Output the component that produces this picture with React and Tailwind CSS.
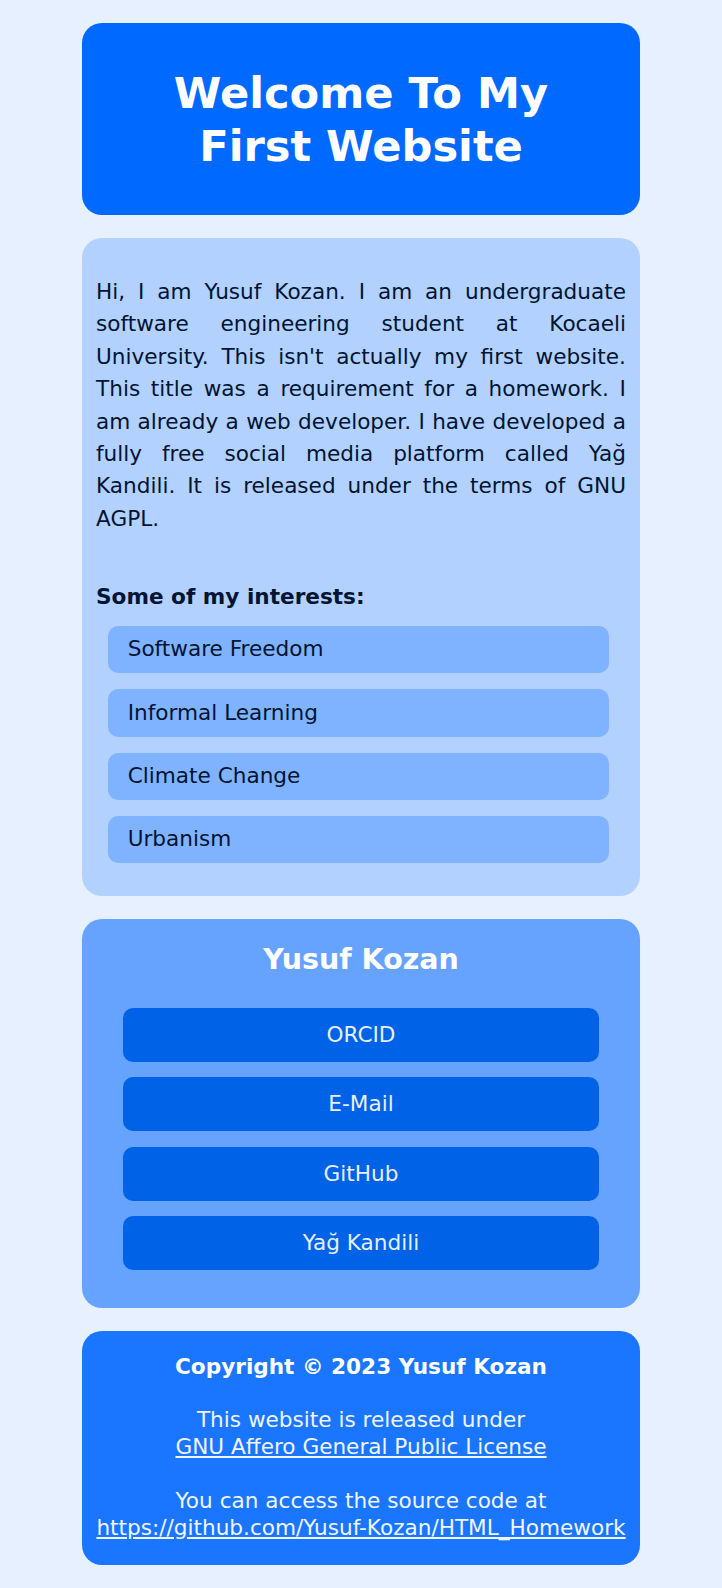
import React from 'react';

const interests = ['Software Freedom', 'Informal Learning', 'Climate Change', 'Urbanism'];
const links = ['ORCID', 'E-Mail', 'GitHub', 'Yağ Kandili'];

const App = () => {
    return (
        <div className="min-h-screen bg-[#e6f0ff] font-['DejaVu_Sans',sans-serif] pt-[23px] pb-[23px]">
            <div className="w-[558px] mx-auto flex flex-col gap-[23px]">
                {/* header */}
                <header className="bg-[#0069ff] rounded-[20px] pt-[44px] pb-[42.7px] text-center">
                    <h1 className="text-white font-bold text-[43.2px] leading-[52.6px]">
                        Welcome To My
                        <br />
                        First Website
                    </h1>
                </header>

                {/* about */}
                <section className="bg-[#b3d1ff] rounded-[20px] px-[14px] pt-[38px] pb-[33px] text-[#001433]">
                    <p className="text-[21.6px] leading-[32.4px] text-justify">
                        Hi, I am Yusuf Kozan. I am an undergraduate software engineering student at Kocaeli
                        University. This isn't actually my first website. This title was a requirement for a
                        homework. I am already a web developer. I have developed a fully free social media
                        platform called Yağ Kandili. It is released under the terms of GNU AGPL.
                    </p>
                    <h3 className="mt-[45.6px] text-[21.6px] leading-[32.4px] font-bold">Some of my interests:</h3>
                    <ul className="mt-[12.6px] ml-[11.7px] mr-[16.7px] flex flex-col gap-[15.8px]">
                        {interests.map((item) => (
                            <li
                                key={item}
                                className="h-[47.6px] flex items-center bg-[#80b3ff] rounded-[10px] pl-[20px] text-[21.6px]"
                            >
                                {item}
                            </li>
                        ))}
                    </ul>
                </section>

                {/* profile links */}
                <section className="bg-[#66a3ff] rounded-[20px] pt-[24px] pb-[38px] px-[41px]">
                    <h2 className="text-center text-white font-bold text-[28.5px] leading-[33px]">Yusuf Kozan</h2>
                    <div className="mt-[31.5px] flex flex-col gap-[15.8px]">
                        {links.map((link) => (
                            <a
                                key={link}
                                href="#"
                                className="h-[53.7px] flex items-center justify-center bg-[#0062e6] rounded-[10px] text-[#e6f0ff] text-[21.6px]"
                            >
                                {link}
                            </a>
                        ))}
                    </div>
                </section>

                {/* footer */}
                <footer className="bg-[#1a75ff] rounded-[20px] pt-[22.6px] pb-[23.5px] text-center text-[#f0f6ff] text-[21.6px] leading-[26.83px]">
                    <p className="font-bold text-white">Copyright © 2023 Yusuf Kozan</p>
                    <br />
                    <p>
                        This website is released under
                        <br />
                        <a href="#" className="underline">GNU Affero General Public License</a>
                    </p>
                    <br />
                    <p>
                        You can access the source code at
                        <br />
                        <a href="#" className="underline">https://github.com/Yusuf-Kozan/HTML_Homework</a>
                    </p>
                </footer>
            </div>
        </div>
    );
};

export default App;
